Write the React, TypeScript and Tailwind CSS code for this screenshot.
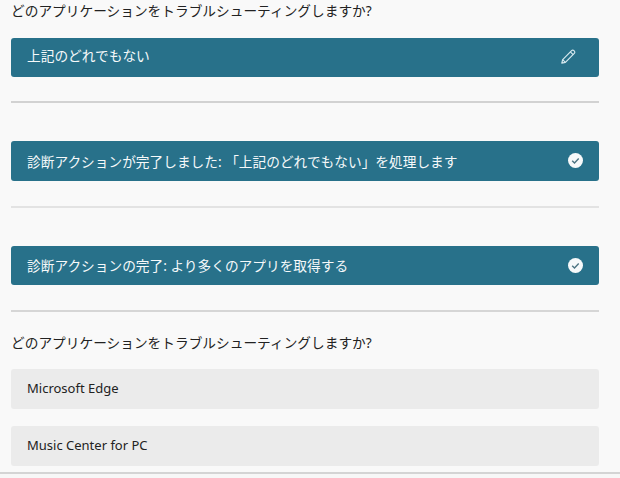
import type { ReactNode } from 'react'

const QUESTION = 'どのアプリケーションをトラブルシューティングしますか?'

function PencilIcon() {
  return (
    <svg className="w-[17px] h-[17px] text-[#d5e8ee]" fill="none" stroke="currentColor" viewBox="0 0 17 17">
      <path strokeWidth={1.2} strokeLinejoin="round" d="M1.8 15.2l.9-3.6L11.6 2.7a1.6 1.6 0 0 1 2.3 0l.4.4a1.6 1.6 0 0 1 0 2.3L5.4 14.3z" />
      <path strokeWidth={1.2} d="M2.7 11.6l2.7 2.7M10.4 3.9l2.7 2.7" />
    </svg>
  )
}

function CheckIcon() {
  return (
    <svg className="w-[15px] h-[15px]" viewBox="0 0 15 15">
      <circle cx="7.5" cy="7.5" r="7.5" fill="#f7f9fa" />
      <path d="M4.2 7.8l2.3 2.2 4.2-4.4" fill="none" stroke="#4d7482" strokeWidth={1.4} />
    </svg>
  )
}

function Banner({ text, icon, className, textClass }: { text: string; icon: ReactNode; className: string; textClass: string }) {
  return (
    <div className={`${className} bg-[#28718a] rounded-[3px] flex items-center justify-between pl-4 text-[#f6f9fa] text-[13.7px]`}>
      <span className={textClass}>{text}</span>
      {icon}
    </div>
  )
}

function Divider({ className }: { className: string }) {
  return <div className={`h-[2px] ${className}`} />
}

function Choice({ text }: { text: string }) {
  return (
    <div className="h-10 bg-[#ebebeb] rounded-[3px] flex items-center pl-4 pb-[1px] text-[13px] text-[#222]">
      {text}
    </div>
  )
}

export default function App() {
  return (
    <div
      className="w-[620px] h-[478px] overflow-hidden bg-[#f9f9f9] flex flex-col"
      style={{ fontFamily: '"Noto Sans", "Noto Sans CJK JP", sans-serif' }}
    >
      <div className="flex-1 flex flex-col pl-[11px] pr-[21px]">
        <p className="h-[38px] pb-[15px] flex items-center text-[13.7px] text-[#222]">{QUESTION}</p>
        <Banner text="上記のどれでもない" icon={<PencilIcon />} className="h-[39px] pr-[22px] pb-[3px]" textClass="" />
        <Divider className="mt-[24px] bg-[#d2d2d2]" />
        <div className="mt-[38px]">
          <Banner
            text="診断アクションが完了しました: 「上記のどれでもない」を処理します"
            icon={<CheckIcon />}
            className="h-10 pr-4 pb-[1px]"
            textClass="pt-[3px]"
          />
        </div>
        <Divider className="mt-[25px] bg-[#e3e3e3]" />
        <div className="mt-[38px]">
          <Banner
            text="診断アクションの完了: より多くのアプリを取得する"
            icon={<CheckIcon />}
            className="h-[39px] pr-4"
            textClass="pt-[2px]"
          />
        </div>
        <Divider className="mt-[25px] bg-[#d6d6d6]" />
        <p className="h-[57px] pt-[6px] flex items-center text-[13.7px] text-[#222]">{QUESTION}</p>
        <Choice text="Microsoft Edge" />
        <div className="mt-[17px]">
          <Choice text="Music Center for PC" />
        </div>
      </div>
      <div className="h-[6px] border-t-2 border-[#d4d4d4] bg-[#f7f7f7]" />
    </div>
  )
}
